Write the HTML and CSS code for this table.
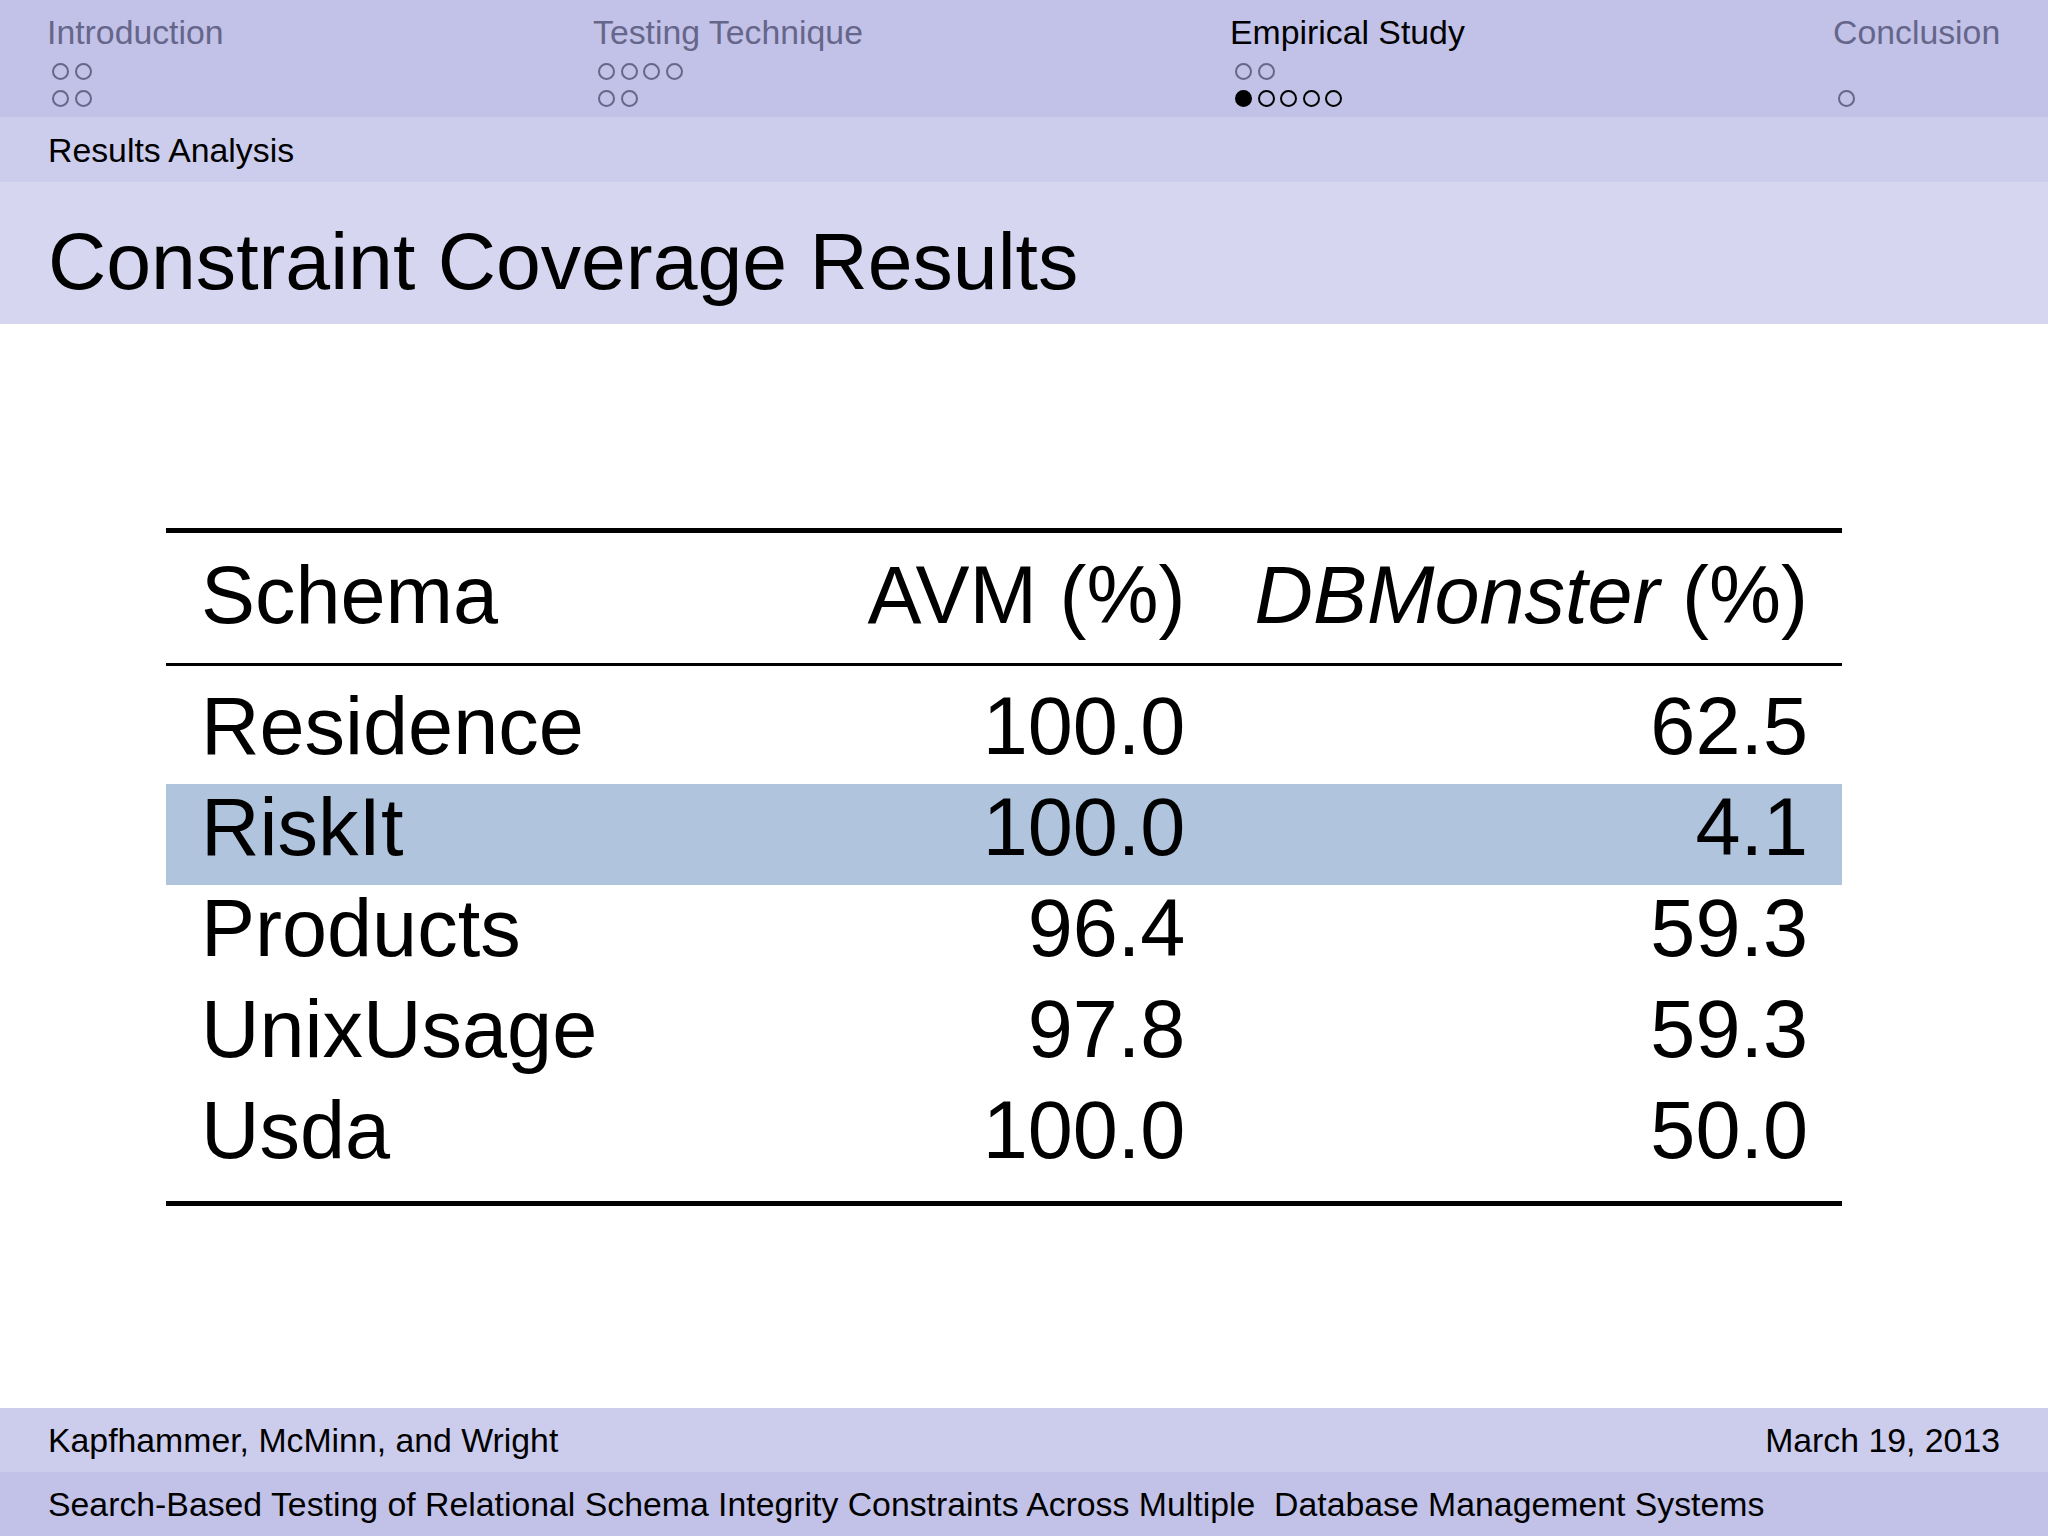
FILE: index.html
```html
<!DOCTYPE html>
<html lang="en">
<head>
<meta charset="utf-8">
<title>Constraint Coverage Results</title>
<link rel="stylesheet" href="styles.css">
</head>
<body>
<div class="slide">
  <header class="nav">
    <div class="navsec dim">
      <div class="navtitle">Introduction</div>
      <div class="dots">
        <div class="dotrow"><span class="c"></span><span class="c"></span></div>
        <div class="dotrow"><span class="c"></span><span class="c"></span></div>
      </div>
    </div>
    <div class="navsec dim">
      <div class="navtitle">Testing Technique</div>
      <div class="dots">
        <div class="dotrow"><span class="c"></span><span class="c"></span><span class="c"></span><span class="c"></span></div>
        <div class="dotrow"><span class="c"></span><span class="c"></span></div>
      </div>
    </div>
    <div class="navsec current">
      <div class="navtitle">Empirical Study</div>
      <div class="dots">
        <div class="dotrow dim"><span class="c"></span><span class="c"></span></div>
        <div class="dotrow active"><span class="c on"></span><span class="c"></span><span class="c"></span><span class="c"></span><span class="c"></span></div>
      </div>
    </div>
    <div class="navsec dim">
      <div class="navtitle">Conclusion</div>
      <div class="dots">
        <div class="dotrow"></div>
        <div class="dotrow"><span class="c"></span></div>
      </div>
    </div>
  </header>

  <div class="subbar">Results Analysis</div>

  <div class="titlebar"><h1 class="frametitle">Constraint Coverage Results</h1></div>

  <main class="content">
    <table class="results">
      <thead>
        <tr>
          <th class="name">Schema</th>
          <th class="num">AVM (%)</th>
          <th class="num"><em>DBMonster</em> (%)</th>
        </tr>
      </thead>
      <tbody>
        <tr class="first">
          <td class="name">Residence</td>
          <td class="num">100.0</td>
          <td class="num">62.5</td>
        </tr>
        <tr class="hl">
          <td class="name">RiskIt</td>
          <td class="num">100.0</td>
          <td class="num">4.1</td>
        </tr>
        <tr>
          <td class="name">Products</td>
          <td class="num">96.4</td>
          <td class="num">59.3</td>
        </tr>
        <tr>
          <td class="name">UnixUsage</td>
          <td class="num">97.8</td>
          <td class="num">59.3</td>
        </tr>
        <tr class="last">
          <td class="name">Usda</td>
          <td class="num">100.0</td>
          <td class="num">50.0</td>
        </tr>
      </tbody>
    </table>
  </main>

  <footer class="foot">
    <div class="footrow upper">
      <span>Kapfhammer, McMinn, and Wright</span>
      <span>March 19, 2013</span>
    </div>
    <div class="footrow lower">
      <span>Search-Based Testing of Relational Schema Integrity Constraints Across Multiple&nbsp; Database Management Systems</span>
    </div>
  </footer>
</div>
</body>
</html>
```

FILE: styles.css
```css
html, body {
  margin: 0;
  padding: 0;
  background: #ffffff;
}

.slide {
  width: 2048px;
  height: 1536px;
  display: flex;
  flex-direction: column;
  font-family: "Liberation Sans", Arial, Helvetica, sans-serif;
  color: #000;
  overflow: hidden;
}

/* ---------- navigation head ---------- */
.nav {
  display: grid;
  grid-template-columns: 546px 637px 603px 1fr;
  padding-left: 47px;
  height: 117px;
  background: #c2c2e8;
  box-sizing: border-box;
}

.navsec {
  font-size: 33.8px;
}

.navtitle {
  padding-top: 1px;
  line-height: 62px;
  white-space: nowrap;
}

.dim {
  color: #66668a;
}

.current {
  color: #000;
}

.dots {
  display: flex;
  flex-direction: column;
  gap: 10px;
  padding-left: 5px;
}

.dotrow {
  display: flex;
  gap: 5.5px;
  height: 17px;
}

.dotrow.dim {
  color: #66668a;
}

.dotrow.active {
  color: #000;
}

.c {
  display: block;
  width: 17px;
  height: 17px;
  box-sizing: border-box;
  border: 2px solid currentColor;
  border-radius: 50%;
}

.active .c {
  border-width: 2.5px;
}

.c.on {
  background: currentColor;
}

/* ---------- subsection bar ---------- */
.subbar {
  height: 65px;
  box-sizing: border-box;
  padding: 1px 0 0 48px;
  line-height: 64px;
  font-size: 33.8px;
  background: #ccccec;
}

/* ---------- frame title ---------- */
.titlebar {
  height: 142px;
  box-sizing: border-box;
  padding: 39px 0 0 48px;
  background: #d6d6f0;
}

.frametitle {
  margin: 0;
  font-size: 80.6px;
  font-weight: normal;
  line-height: 81px;
  white-space: nowrap;
}

/* ---------- content / table ---------- */
.content {
  flex: 1;
  padding-top: 204px;
}

.results {
  margin-left: 166px;
  width: 1676px;
  border-collapse: separate;
  border-spacing: 0;
  font-size: 81px;
}

.results th,
.results td {
  font-weight: normal;
  line-height: 86px;
  padding: 0 34px 15px 35px;
  white-space: nowrap;
}

.results .name {
  text-align: left;
}

.results .num {
  text-align: right;
  width: 1px;
}

.results em {
  font-style: italic;
}

.results thead th {
  border-top: 5px solid #000;
  border-bottom: 3px solid #000;
  padding-top: 19px;
  padding-bottom: 25px;
}

.results tr.first td {
  padding-top: 17px;
}

.results tr.last td {
  border-bottom: 5px solid #000;
  padding-bottom: 28px;
}

.results tr.hl td {
  background: #b0c4de;
}

/* ---------- footer ---------- */
.foot {
  font-size: 33.8px;
}

.footrow {
  height: 64px;
  padding: 1px 48px 0 48px;
  box-sizing: border-box;
  line-height: 63px;
  display: flex;
  justify-content: space-between;
  white-space: nowrap;
}

.footrow.upper {
  background: #ccccec;
}

.footrow.lower {
  background: #c2c2e8;
}
```
